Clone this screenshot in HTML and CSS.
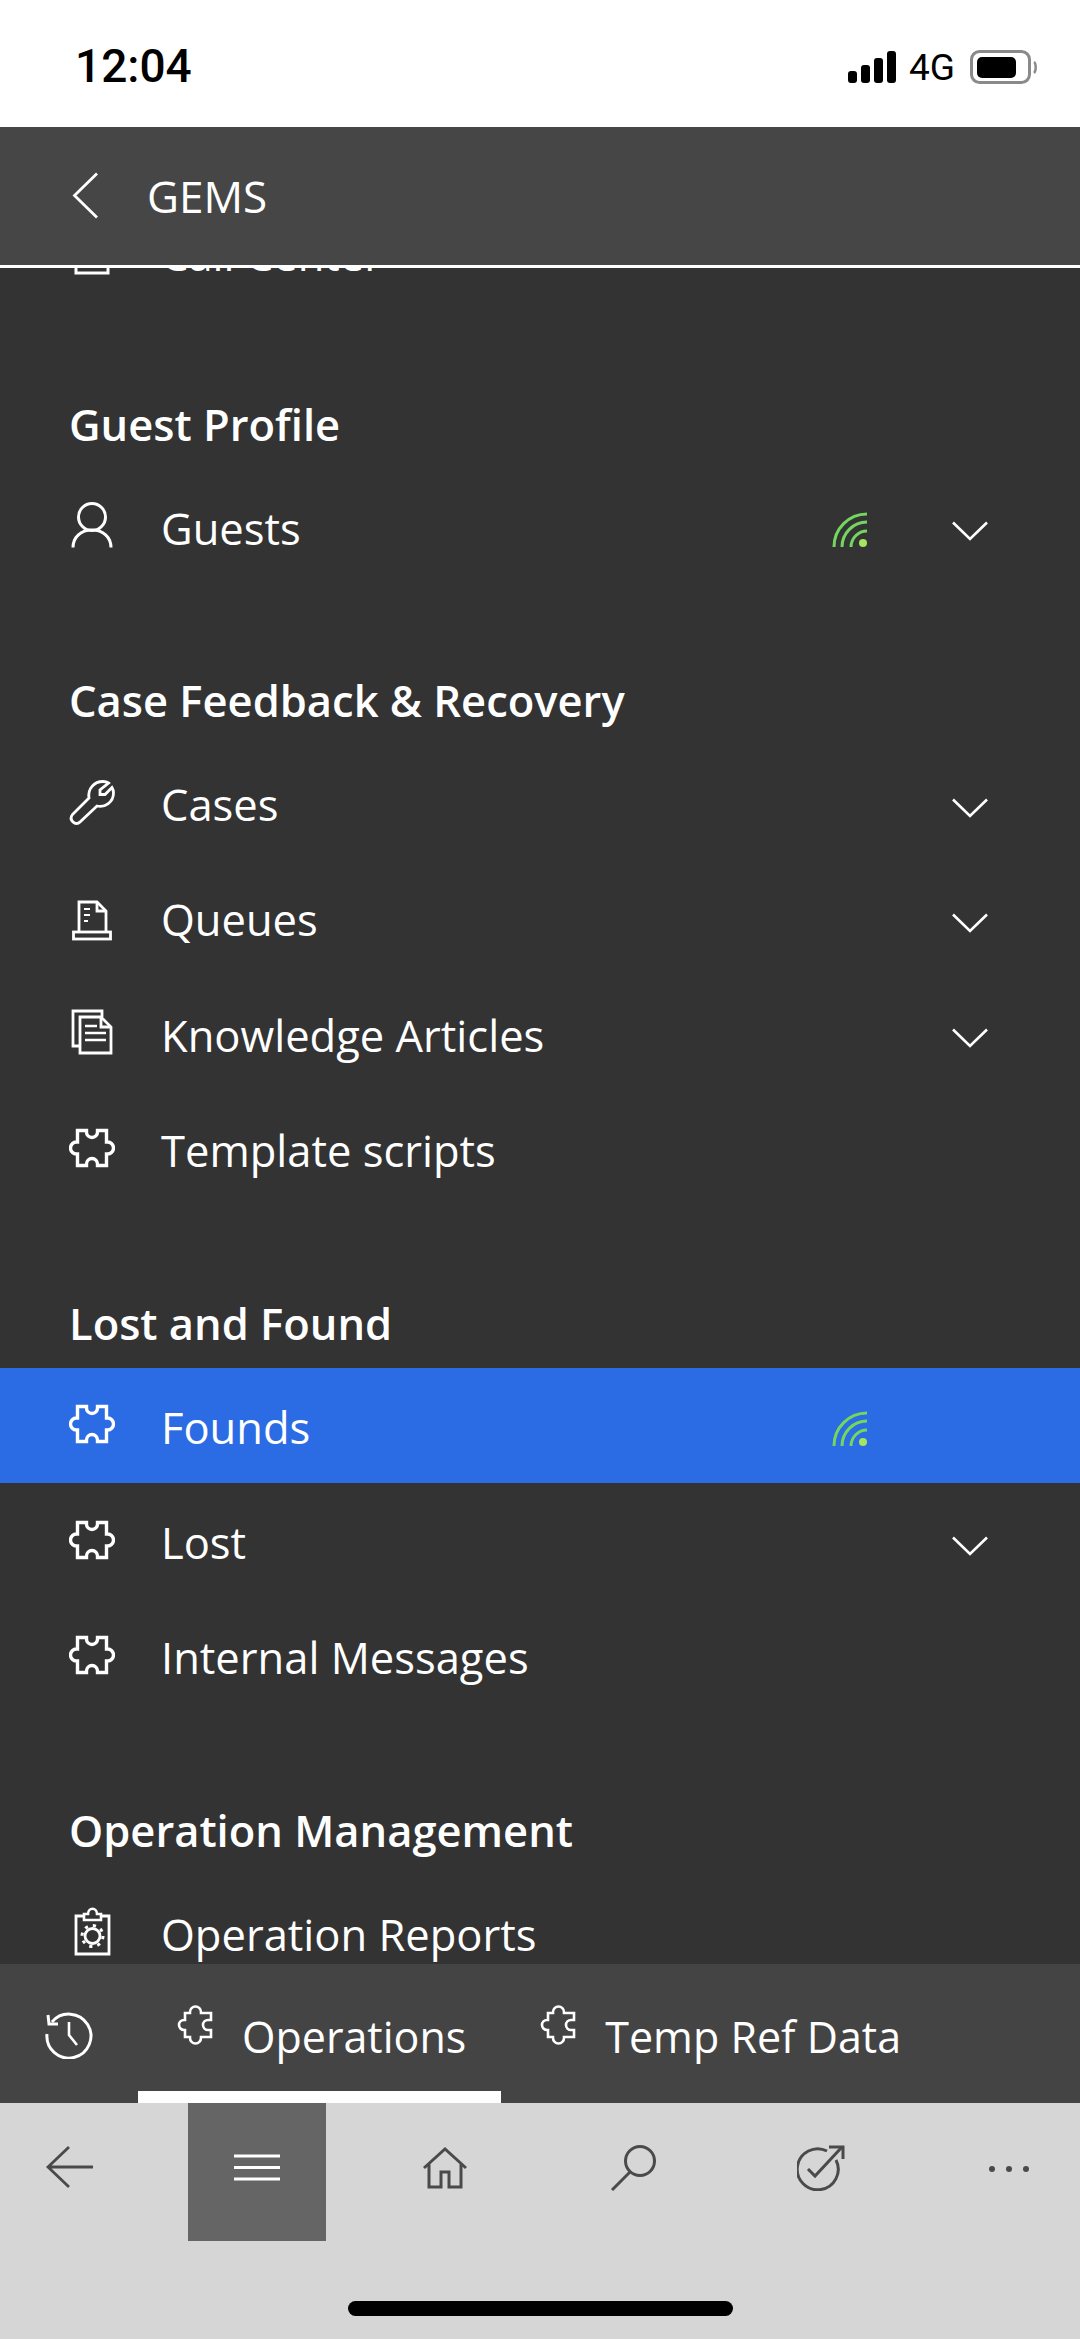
FILE: index.html
```html
<!DOCTYPE html>
<html lang="en">

<head>
  <meta charset="UTF-8">
  <meta name="viewport" content="width=device-width, initial-scale=1.0">
  <title>GEMS</title>
  <link rel="stylesheet" href="styles.css">
</head>

<body>

  <svg class="defs" width="0" height="0">
    <symbol id="puzzle" viewBox="0 0 46 46">
      <path d="M8.5 5.5 H17.5 V7 a5.5 5.5 0 0 0 11 0 V5.5 H37.5 V17 h1 a6 6 0 0 1 0 12 h-1 V40.5 H28.5 V39 a5.5 5.5 0 0 0 -11 0 V40.5 H8.5 V29 H7.5 a6 6 0 0 1 0 -12 h1 Z" fill="none" stroke="currentColor" stroke-width="3.4" />
    </symbol>
    <symbol id="puzzle-tab" viewBox="0 0 36 42">
      <path d="M8 10 H13 V9 a5.5 5.5 0 1 1 11 0 V10 H34 V17 H31 a5 5 0 0 0 0 10 h3 V34 H24 V35 a5.5 5.5 0 0 1 -11 0 V34 H8 V27 H7 a5 5 0 0 1 0 -10 h1 Z" fill="none" stroke="currentColor" stroke-width="2.6" />
    </symbol>
    <symbol id="chevron" viewBox="0 0 36 20">
      <path d="M1 1.5 L18 18 L35 1.5" fill="none" stroke="currentColor" stroke-width="2.6" />
    </symbol>
    <symbol id="wifi" viewBox="0 0 36 36">
      <g fill="none" stroke="#74d65e" stroke-width="3">
        <path d="M2 35 A33 33 0 0 1 35 2" />
        <path d="M10 35 A25 25 0 0 1 35 10" />
        <path d="M19 35 A16 16 0 0 1 35 19" />
      </g>
      <circle cx="31" cy="31" r="4" fill="#a6e35f" />
    </symbol>
  </svg>

  <div class="status-bar">
    <span class="clock">12:04</span>
    <div class="status-icons">
      <svg class="signal" width="48" height="32" viewBox="0 0 48 32">
        <rect x="0" y="20" width="9" height="12" rx="3" />
        <rect x="13" y="14" width="9" height="18" rx="3" />
        <rect x="26" y="7" width="9" height="25" rx="3" />
        <rect x="39" y="0" width="9" height="32" rx="3" />
      </svg>
      <span class="network">4G</span>
      <svg class="battery" width="68" height="34" viewBox="0 0 68 34">
        <rect x="1.5" y="1.5" width="58" height="31" rx="8" fill="none" stroke="#8a8a8a" stroke-width="3" />
        <rect x="7" y="7" width="39" height="21" rx="5" fill="#000" />
        <path d="M64 12 C66 13 66.500 21 64 23" fill="none" stroke="#8a8a8a" stroke-width="2.500" />
      </svg>
    </div>
  </div>

  <header class="app-header">
    <svg class="back" width="27" height="47" viewBox="0 0 27 47">
      <path d="M25 1.500 L2.500 23.500 L25 45.500" fill="none" stroke="currentColor" stroke-width="2.800" />
    </svg>
    <h1 class="app-title">GEMS</h1>
  </header>

  <main class="menu">
    <div class="menu-scroll">

      <div class="row">
        <svg class="row-icon" width="46" height="46" viewBox="0 0 46 46">
          <rect x="7" y="6" width="32" height="38" fill="none" stroke="currentColor" stroke-width="3" />
        </svg>
        <span class="row-label">Call Center</span>
      </div>

      <h2 class="section-title section-first">Guest Profile</h2>
      <div class="row">
        <svg class="row-icon" width="46" height="46" viewBox="0 0 46 46">
          <g fill="none" stroke="currentColor" stroke-width="3">
            <circle cx="23" cy="15" r="13.500" />
            <path d="M4 45.500 C4 35 12 28 23 28 C34 28 42 35 42 45.500" />
          </g>
        </svg>
        <span class="row-label">Guests</span>
        <svg class="wifi"><use href="#wifi" /></svg>
        <svg class="chevron"><use href="#chevron" /></svg>
      </div>

      <h2 class="section-title">Case Feedback &amp; Recovery</h2>
      <div class="row">
        <svg class="row-icon" width="46" height="46" viewBox="0 0 46 46">
          <path d="M3.500 35.500 L20 19 C18.500 10 25 2.500 34 2.500 C36 2.500 38 3 39.500 4 L31 11 V15.500 H36 L43 8.500 C44 10 44.500 12 44.500 14 C44.500 23 36 29 28 27 L11 43 C9 45 6 45 4 43 C2 41 1.500 38 3.500 35.500 Z" fill="none" stroke="currentColor" stroke-width="2.800" />
        </svg>
        <span class="row-label">Cases</span>
        <svg class="chevron"><use href="#chevron" /></svg>
      </div>
      <div class="row">
        <svg class="row-icon" width="46" height="46" viewBox="0 0 46 46">
          <g fill="none" stroke="currentColor" stroke-width="2.800">
            <path d="M10 38 V8 H28 L37 17 V38" />
            <path d="M28 8 V17 H37" />
            <rect x="4.500" y="38" width="37" height="7" />
            <path d="M15 15 H21 M15 21 H21 M15 27 H19" stroke-width="2" />
          </g>
        </svg>
        <span class="row-label">Queues</span>
        <svg class="chevron"><use href="#chevron" /></svg>
      </div>
      <div class="row">
        <svg class="row-icon" width="46" height="46" viewBox="0 0 46 46">
          <g fill="none" stroke="currentColor" stroke-width="2.800">
            <path d="M10 37 H4 V2 H33 V8" />
            <path d="M11 8 H32 L42 18 V44 H11 Z" />
            <path d="M32 8 V18 H42" />
            <path d="M16 17 H28 M16 24 H37 M16 31 H37" stroke-width="2.400" />
          </g>
        </svg>
        <span class="row-label">Knowledge Articles</span>
        <svg class="chevron"><use href="#chevron" /></svg>
      </div>
      <div class="row">
        <svg class="row-icon"><use href="#puzzle" /></svg>
        <span class="row-label">Template scripts</span>
      </div>

      <h2 class="section-title">Lost and Found</h2>
      <div class="row row-active">
        <svg class="row-icon"><use href="#puzzle" /></svg>
        <span class="row-label">Founds</span>
        <svg class="wifi"><use href="#wifi" /></svg>
        <span class="chevron"></span>
      </div>
      <div class="row">
        <svg class="row-icon"><use href="#puzzle" /></svg>
        <span class="row-label">Lost</span>
        <svg class="chevron"><use href="#chevron" /></svg>
      </div>
      <div class="row">
        <svg class="row-icon"><use href="#puzzle" /></svg>
        <span class="row-label">Internal Messages</span>
      </div>

      <h2 class="section-title">Operation Management</h2>
      <div class="row">
        <svg class="row-icon" width="46" height="46" viewBox="0 0 46 46">
          <g fill="none" stroke="currentColor">
            <path d="M15 8 H7 V46 H40 V8 H32" stroke-width="2.800" />
            <path d="M15 12 V6 H19 C19 -1 28 -1 28 6 H32 V12 Z" stroke-width="2.600" />
            <circle cx="23.500" cy="28" r="7.500" stroke-width="2.800" />
            <circle cx="23.500" cy="28" r="10.500" stroke-width="3" stroke-dasharray="3.200 5.050" />
          </g>
        </svg>
        <span class="row-label">Operation Reports</span>
      </div>

    </div>
  </main>

  <div class="tabs">
    <div class="tab-history">
      <svg width="48" height="50" viewBox="0 0 48 50">
        <g fill="none" stroke="currentColor" stroke-width="3">
          <path d="M7 13 A22 22 0 1 1 2 25" />
          <path d="M3 6 L4 15 H13" />
          <path d="M24 13 V26 L32 36" stroke-width="2.600" />
        </g>
      </svg>
    </div>
    <div class="tab tab-active">
      <svg class="tab-icon"><use href="#puzzle-tab" /></svg>
      <span class="tab-label">Operations</span>
    </div>
    <div class="tab">
      <svg class="tab-icon"><use href="#puzzle-tab" /></svg>
      <span class="tab-label">Temp Ref Data</span>
    </div>
  </div>

  <nav class="toolbar">
    <div class="toolbar-row">
      <div class="tool">
        <svg width="48" height="44" viewBox="0 0 48 44">
          <path d="M24 2 L3 22 L24 42 M3 22 H48" fill="none" stroke="currentColor" stroke-width="2.800" />
        </svg>
      </div>
      <div class="tool tool-active">
        <svg width="48" height="44" viewBox="0 0 48 44">
          <path d="M1 11 H47 M1 22.500 H47 M1 34 H47" fill="none" stroke="currentColor" stroke-width="3" />
        </svg>
      </div>
      <div class="tool">
        <svg width="46" height="44" viewBox="0 0 46 44">
          <path d="M2 23 L23 4 L44 23 M7 19 V42 H19 V27 H27 V42 H39 V19" fill="none" stroke="currentColor" stroke-width="3" />
        </svg>
      </div>
      <div class="tool">
        <svg width="46" height="46" viewBox="0 0 46 46">
          <g fill="none" stroke="currentColor" stroke-width="3">
            <circle cx="30" cy="16" r="14.500" />
            <path d="M20 27 L2 45" />
          </g>
        </svg>
      </div>
      <div class="tool">
        <svg width="48" height="46" viewBox="0 0 48 46">
          <g fill="none" stroke="currentColor" stroke-width="3">
            <path d="M39 15 A20.500 20.500 0 1 1 30 6" />
            <path d="M11 24 L18 31 L45 2" />
            <path d="M32 2 H46 V14" />
          </g>
        </svg>
      </div>
      <div class="tool">
        <div class="dots"><i></i><i></i><i></i></div>
      </div>
    </div>
    <div class="home-indicator"></div>
  </nav>

</body>

</html>
```

FILE: styles.css
```css
body {
  font-family: "Open Sans", "Noto Sans", sans-serif;
  margin: 0;
  padding: 0;
  width: 1080px;
  height: 2339px;
  display: flex;
  flex-direction: column;
  overflow: hidden;
  background-color: #333333;
  color: #fff;
}

.defs {
  position: absolute;
}

.status-bar {
  height: 127px;
  flex: none;
  box-sizing: border-box;
  background-color: #fff;
  color: #000;
  padding: 0 42px 0 75px;
  display: flex;
  justify-content: space-between;
  font-family: Roboto, sans-serif;
}

.clock {
  font-size: 46px;
  font-weight: 500;
  line-height: 66px;
  padding-top: 33px;
}

.status-icons {
  display: flex;
  align-items: flex-start;
  padding-top: 50px;
}

.signal {
  margin-top: 1px;
}

.network {
  font-size: 37px;
  font-weight: 400;
  line-height: 34px;
  margin: 1px 15px 0 13px;
}

.app-header {
  height: 138px;
  flex: none;
  box-sizing: content-box;
  background-color: #464646;
  border-bottom: 3px solid #fff;
  display: flex;
  align-items: center;
  padding-left: 72px;
}

.back {
  margin-top: -2px;
}

.app-title {
  font-size: 44px;
  font-weight: 400;
  margin: 0 0 0 48px;
}

.menu {
  flex: 1;
  min-height: 0;
  overflow: hidden;
  background-color: #333333;
}

.menu-scroll {
  margin-top: -72.400px;
}

.section-title {
  height: 161px;
  box-sizing: border-box;
  margin: 0;
  padding: 87px 0 0 69px;
  font-size: 43.500px;
  font-weight: 600;
  line-height: 60px;
}

.section-first {
  height: 158px;
  padding-top: 84px;
}

.row {
  height: 115.400px;
  box-sizing: border-box;
  padding: 4px 92px 0 69px;
  display: flex;
  align-items: center;
}

.row-active {
  background-color: #2b6be3;
}

.row-icon {
  width: 46px;
  height: 46px;
  flex: none;
  margin-bottom: 7px;
  overflow: visible;
}

.row-label {
  flex: 1;
  margin-left: 46px;
  font-size: 43.500px;
  line-height: 60px;
}

.wifi {
  width: 36px;
  height: 36px;
  flex: none;
  margin: 3px 84px 0 0;
}

.chevron {
  width: 36px;
  height: 20px;
  flex: none;
  margin-top: 5px;
}

.tabs {
  height: 139px;
  flex: none;
  background-color: #444444;
  display: flex;
}

.tab-history {
  width: 138px;
  display: flex;
  justify-content: center;
  padding-top: 45px;
  box-sizing: border-box;
}

.tab {
  box-sizing: border-box;
  display: flex;
  align-items: flex-start;
  gap: 29px;
  padding: 39px 35px 0 39px;
  border-bottom: 12px solid transparent;
}

.tab-active {
  border-bottom-color: #fff;
}

.tab-icon {
  width: 36px;
  height: 42px;
  flex: none;
}

.tab-label {
  font-size: 43px;
  line-height: 60px;
  margin-top: 4px;
}

.toolbar {
  height: 236px;
  flex: none;
  background-color: #d6d6d6;
  color: #4a4a4a;
}

.toolbar-row {
  display: flex;
  gap: 50px;
}

.tool {
  width: 138px;
  height: 138px;
  box-sizing: border-box;
  padding-top: 42px;
  display: flex;
  justify-content: center;
  align-items: flex-start;
}

.tool-active {
  background-color: #656565;
  color: #fff;
}

.dots {
  display: flex;
  gap: 11px;
  padding-top: 21px;
}

.dots i {
  width: 6px;
  height: 6px;
  border-radius: 50%;
  background-color: #4a4a4a;
}

.home-indicator {
  width: 385px;
  height: 15px;
  margin: 60px 0 0 348px;
  border-radius: 8px;
  background-color: #000;
}
```
